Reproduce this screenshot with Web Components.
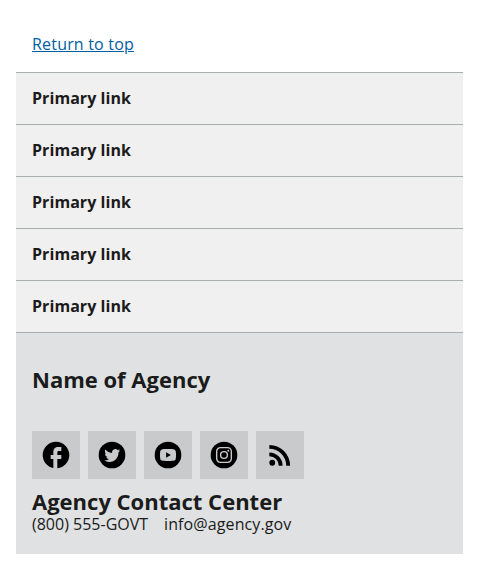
<!DOCTYPE html>
<html lang="en"><head><meta charset="utf-8"><title>Footer</title>
<style>html,body{margin:0;background:#fff}body{font-family:"Open Sans",sans-serif;color:#1b1b1b;padding:16px}</style></head><body>
<agency-footer></agency-footer>
<script>
const define=(name,html)=>customElements.define(name,class extends HTMLElement{
  constructor(){super();this.attachShadow({mode:"open"}).innerHTML=html;}
});
define("footer-link",`<style>:host{display:block;border-top:1px solid #a9aeb1;padding:17px 16px;line-height:17px;font-size:16px;font-weight:700;letter-spacing:.06px}a{color:inherit;text-decoration:none;display:block}</style><a href="#"><slot></slot></a>`);
const disc='<circle cx="12" cy="12" r="10"/>';
const icons={
facebook:'<path d="M22 12c0-5.52-4.48-10-10-10S2 6.48 2 12c0 4.84 3.44 8.87 8 9.8V15H8v-3h2V9.5C10 7.57 11.57 6 13.5 6H16v3h-2c-.55 0-1 .45-1 1v2h3v3h-3v6.95c5.05-.5 9-4.76 9-9.95z"/>',
twitter:disc+'<path class="cut" transform="translate(6.2 6.4) scale(.495)" d="M23.953 4.57a10 10 0 0 1-2.825.775 4.958 4.958 0 0 0 2.163-2.723 9.9 9.9 0 0 1-3.127 1.184 4.920 4.920 0 0 0-8.384 4.482C7.690 8.095 4.067 6.130 1.640 3.162a4.822 4.822 0 0 0-.666 2.475c0 1.710.870 3.213 2.188 4.096a4.904 4.904 0 0 1-2.228-.616v.060a4.923 4.923 0 0 0 3.946 4.827 4.996 4.996 0 0 1-2.212.085 4.936 4.936 0 0 0 4.604 3.417 9.867 9.867 0 0 1-6.102 2.105c-.390 0-.779-.023-1.170-.067a13.995 13.995 0 0 0 7.557 2.209c9.053 0 13.998-7.496 13.998-13.985 0-.210 0-.420-.015-.630A9.935 9.935 0 0 0 24 4.590z"/>',
youtube:disc+'<path class="cut" d="M18 12c0 1.400-.1 2.400-.3 3.100-.2.600-.6.900-1.100 1.100-.7.200-2.100.3-4.600.3s-3.900-.1-4.600-.3c-.5-.2-.9-.5-1.100-1.100-.2-.7-.3-1.700-.3-3.100s.1-2.400.3-3.100c.2-.6.6-.9 1.100-1.100.7-.2 2.100-.3 4.600-.3s3.900.1 4.600.3c.5.200.9.500 1.100 1.100.2.700.3 1.700.3 3.100z"/><path d="M10.600 14.100 14.100 12l-3.500-2.100z"/>',
instagram:disc+'<g class="line"><rect x="6.500" y="6.500" width="11" height="11" rx="2.800"/><circle cx="12" cy="12" r="2.550"/></g><circle class="cut" cx="15.200" cy="8.800" r=".72"/>',
rss:'<path d="M6.180 15.640a2.180 2.180 0 1 1 0 4.360 2.180 2.180 0 0 1 0-4.360zM4 4.440A15.560 15.560 0 0 1 19.560 20h-2.830A12.730 12.730 0 0 0 4 7.270zm0 5.660a9.900 9.900 0 0 1 9.900 9.900h-2.830A7.070 7.070 0 0 0 4 12.930z"/>'};
customElements.define("social-link",class extends HTMLElement{constructor(){super();this.attachShadow({mode:"open"}).innerHTML=`<style>:host{--tile:#c9cacb;display:block;width:48px;height:48px;background:var(--tile)}a{display:grid;place-items:center;height:100%;color:#000}svg{width:32px;height:32px}.cut{fill:var(--tile)}.line{fill:none;stroke:var(--tile);stroke-width:1.05}</style><a href="#" aria-label="${this.getAttribute("name")}"><svg viewBox="0 0 24 24" fill="currentColor">${icons[this.getAttribute("name")]}</svg></a>`}});
define("agency-contact",`<style>:host{display:block;margin-top:11px}h3{margin:0 0 1px;font-size:22px;line-height:22px;font-weight:700}div{display:flex;gap:16px;font-size:16px;line-height:22px}.mail{letter-spacing:.1px}</style><h3>Agency Contact Center</h3><div><span>(800) 555-GOVT</span><span class="mail">info@agency.gov</span></div>`);
define("agency-footer",`<style>:host{display:block}.top{padding:20px 16px;line-height:16px;font-size:16px;letter-spacing:.19px}.top a{color:#005ea2}nav{background:#f0f0f0}section{box-sizing:border-box;height:222px;background:#dfe1e2;border-top:1px solid #a9aeb1;padding:30px 16px 0}h2{margin:0;font-size:22px;line-height:32px;font-weight:700}.social{display:flex;gap:8px;margin-top:36px}</style>
<div class="top"><a href="#">Return to top</a></div>
<nav><footer-link>Primary link</footer-link><footer-link>Primary link</footer-link><footer-link>Primary link</footer-link><footer-link>Primary link</footer-link><footer-link>Primary link</footer-link></nav>
<section><h2>Name of Agency</h2><div class="social"><social-link name="facebook"></social-link><social-link name="twitter"></social-link><social-link name="youtube"></social-link><social-link name="instagram"></social-link><social-link name="rss"></social-link></div><agency-contact></agency-contact></section>`);
</script></body></html>
